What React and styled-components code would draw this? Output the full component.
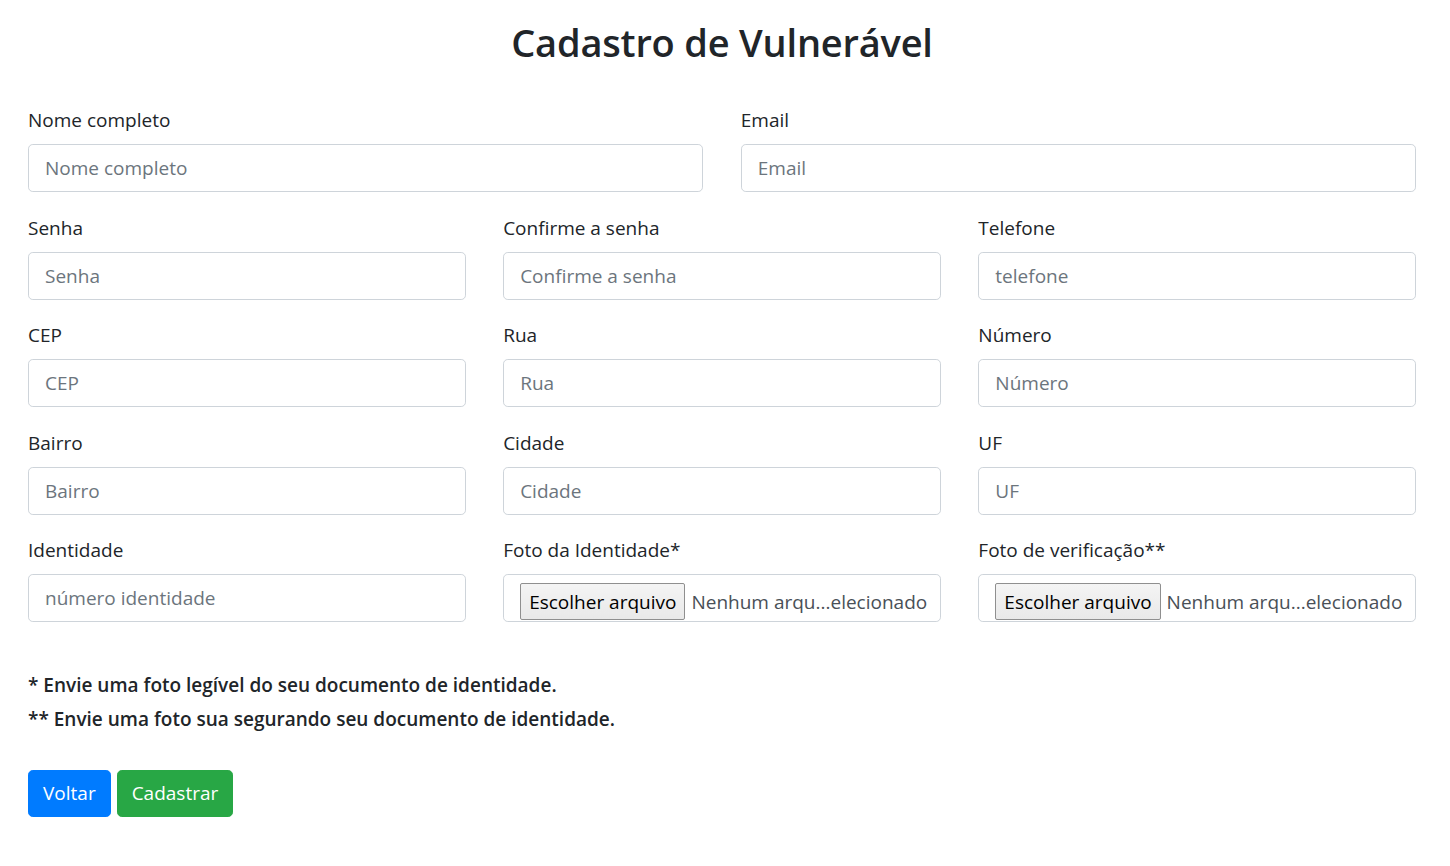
import React from "react";
import styled, { createGlobalStyle } from "styled-components";

const GlobalStyle = createGlobalStyle`
  html, body { margin: 0; padding: 0; background: #fff; }
  body {
    font-family: "Open Sans", "Noto Sans", "Liberation Sans", sans-serif;
    color: #212529;
  }
  * { box-sizing: border-box; }
`;

const Page = styled.div`
  padding: 18px 34px 40px 28px;
`;

const Title = styled.h1`
  margin: 0 0 40px;
  font-size: 38px;
  line-height: 48px;
  font-weight: 600;
  letter-spacing: -0.2px;
  text-align: center;
  color: #212529;
`;

const Grid = styled.div`
  display: grid;
  grid-template-columns: repeat(${(p) => p.$cols}, 1fr);
  column-gap: 37.5px;
`;

const Field = styled.div`
  margin-bottom: 21.5px;
  min-width: 0;
`;

const Label = styled.label`
  display: block;
  font-size: 19px;
  line-height: 29px;
  margin-bottom: 9px;
  color: #212529;
`;

const Input = styled.input`
  display: block;
  width: 100%;
  height: 48px;
  padding: 8px 16px;
  font-family: inherit;
  font-size: 19px;
  line-height: 30px;
  color: #495057;
  background: #fff;
  border: 1px solid #ced4da;
  border-radius: 4.8px;
  outline: none;
  &::placeholder { color: #6c757d; opacity: 1; }
`;

const FileBox = styled.div`
  display: flex;
  align-items: flex-start;
  width: 100%;
  height: 48px;
  padding: 8px 16px 0;
  border: 1px solid #ced4da;
  border-radius: 4.8px;
  background: #fff;
  overflow: hidden;
  white-space: nowrap;
`;

const FileButton = styled.span`
  display: inline-flex;
  align-items: center;
  height: 37px;
  padding: 0 8px;
  font-size: 19px;
  color: #000;
  background: linear-gradient(#f4f4f4, #e9e9e9);
  border: 1px solid #8f8f8f;
  border-radius: 2px;
  flex-shrink: 0;
`;

const FileName = styled.span`
  display: inline-flex;
  align-items: center;
  height: 37px;
  margin-left: 6px;
  font-size: 19px;
  color: #495057;
`;

const Notes = styled.div`
  margin-top: 26px;
`;

const Note = styled.p`
  margin: 0 0 4px;
  font-size: 19px;
  line-height: 30px;
  font-weight: 600;
  color: #212529;
`;

const Actions = styled.div`
  display: flex;
  gap: 6px;
  margin-top: 36px;
`;

const Button = styled.button`
  height: 47px;
  padding: 0 14px;
  font-family: inherit;
  font-size: 19px;
  color: #fff;
  border: 1px solid ${(p) => (p.$variant === "success" ? "#28a745" : "#007bff")};
  background: ${(p) => (p.$variant === "success" ? "#28a745" : "#007bff")};
  border-radius: 4.8px;
  cursor: pointer;
`;

const TextField = ({ label, placeholder, type = "text" }) => (
  <Field>
    <Label>{label}</Label>
    <Input type={type} placeholder={placeholder} />
  </Field>
);

const FileField = ({ label }) => (
  <Field>
    <Label>{label}</Label>
    <FileBox>
      <FileButton>Escolher arquivo</FileButton>
      <FileName>Nenhum arqu...elecionado</FileName>
    </FileBox>
  </Field>
);

export default function App() {
  return (
    <>
      <GlobalStyle />
      <Page>
        <Title>Cadastro de Vulnerável</Title>
        <Grid $cols={2}>
          <TextField label="Nome completo" placeholder="Nome completo" />
          <TextField label="Email" placeholder="Email" type="email" />
        </Grid>
        <Grid $cols={3}>
          <TextField label="Senha" placeholder="Senha" type="password" />
          <TextField label="Confirme a senha" placeholder="Confirme a senha" type="password" />
          <TextField label="Telefone" placeholder="telefone" />
          <TextField label="CEP" placeholder="CEP" />
          <TextField label="Rua" placeholder="Rua" />
          <TextField label="Número" placeholder="Número" />
          <TextField label="Bairro" placeholder="Bairro" />
          <TextField label="Cidade" placeholder="Cidade" />
          <TextField label="UF" placeholder="UF" />
          <TextField label="Identidade" placeholder="número identidade" />
          <FileField label="Foto da Identidade*" />
          <FileField label="Foto de verificação**" />
        </Grid>
        <Notes>
          <Note>* Envie uma foto legível do seu documento de identidade.</Note>
          <Note>** Envie uma foto sua segurando seu documento de identidade.</Note>
        </Notes>
        <Actions>
          <Button $variant="primary">Voltar</Button>
          <Button $variant="success">Cadastrar</Button>
        </Actions>
      </Page>
    </>
  );
}
